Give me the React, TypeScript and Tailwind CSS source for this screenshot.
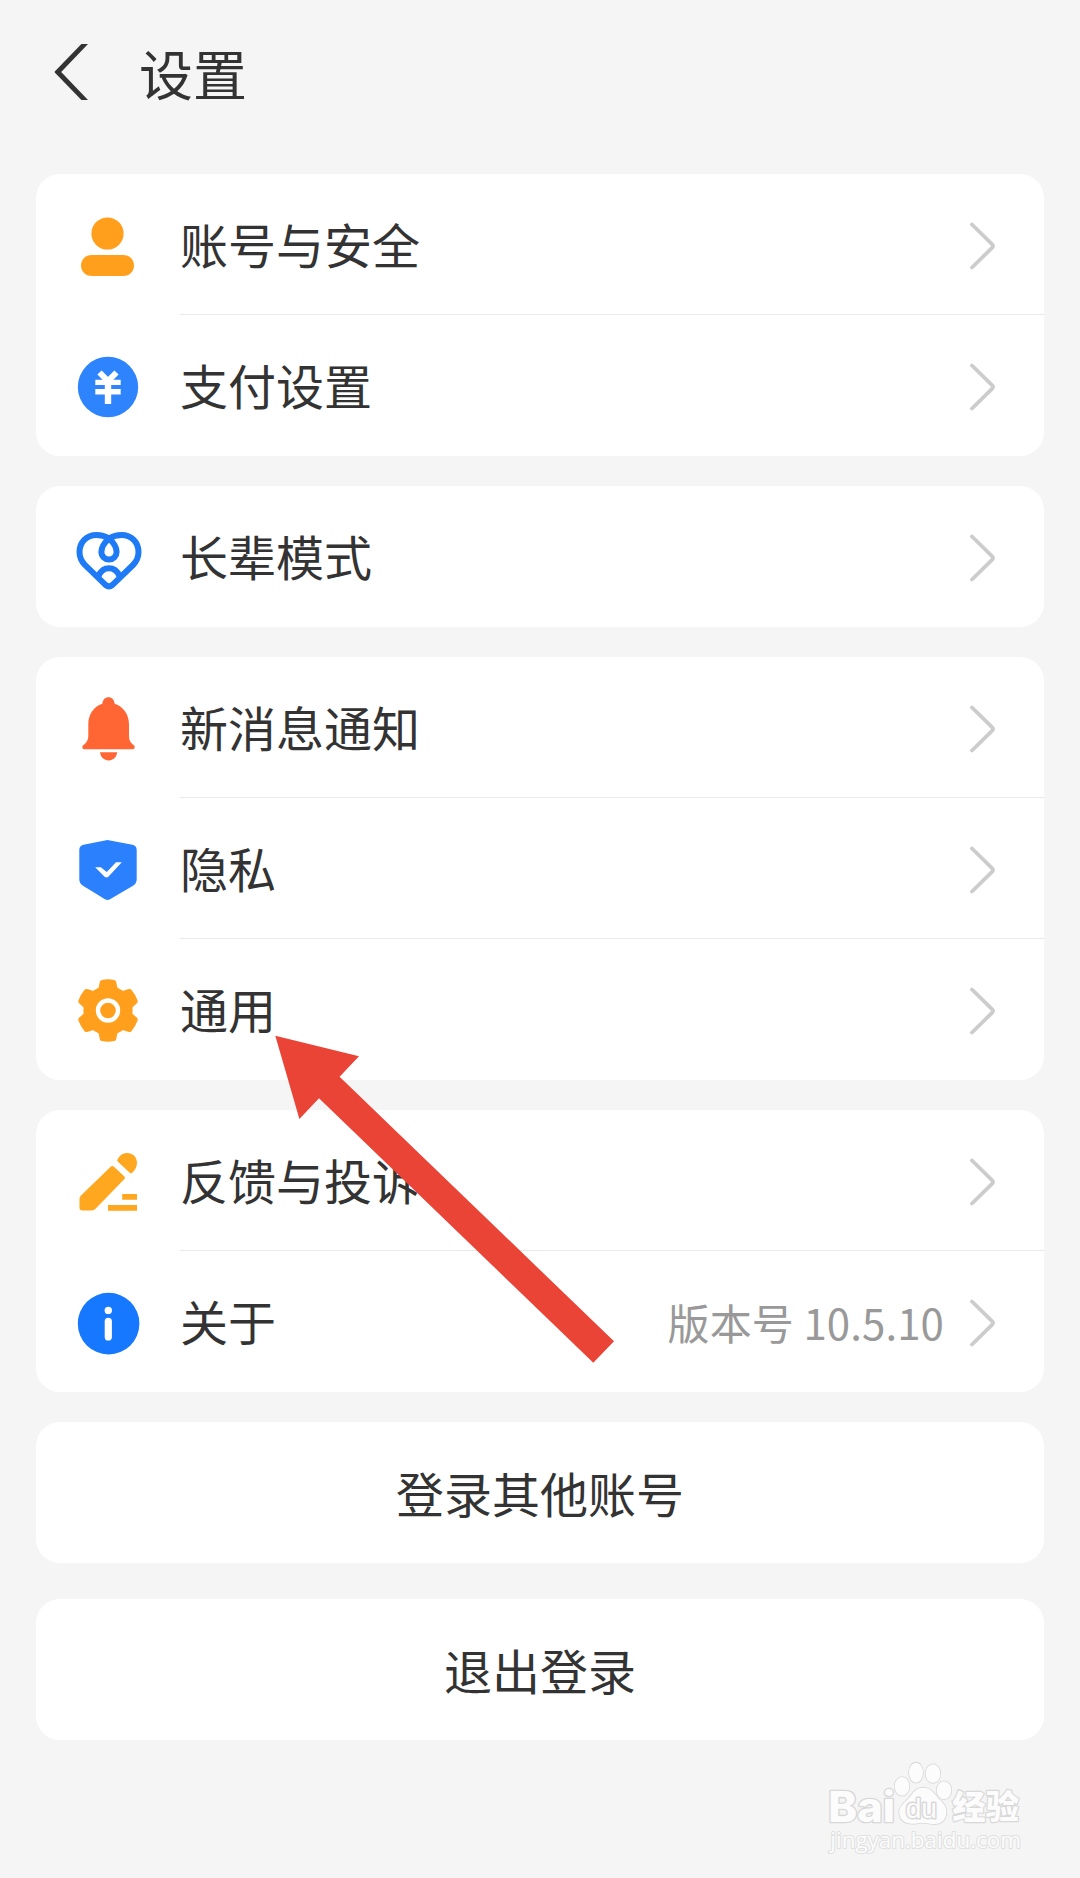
import type { ReactNode } from 'react';

interface SettingItem {
  id: string;
  label: string;
  icon: ReactNode;
  extra?: string;
}

const GEAR_TEETH = [0, 60, 120, 180, 240, 300];

function IconBox({ children }: { children: ReactNode }) {
  return (
    <svg viewBox="0 0 72 71" className="w-[72px] h-[71px] shrink-0" fill="none">
      {children}
    </svg>
  );
}

function IconAccount() {
  return (
    <IconBox>
      <circle cx="35.5" cy="24.5" r="16.1" fill="#ff9f1c" />
      <path
        d="M20 46H51C58 46 62 51 62 56.5C62 62 58 67 51 67H20C13 67 9 62 9 56.5C9 51 13 46 20 46Z"
        fill="#ff9f1c"
      />
    </IconBox>
  );
}

function IconPay() {
  return (
    <IconBox>
      <circle cx="36" cy="37" r="30.2" fill="#2e84fd" />
      <path d="M27.5 22.5L36 31L44.5 22.5" stroke="#fff" strokeWidth="6" />
      <path d="M23.3 32.4H48.7M23.3 41.8H48.7" stroke="#fff" strokeWidth="5.4" />
      <path d="M36 30V54" stroke="#fff" strokeWidth="6.4" />
    </IconBox>
  );
}

function IconElder() {
  return (
    <IconBox>
      <g stroke="#1f7af5" strokeWidth="6" strokeLinejoin="round">
        <path d="M37 17.5C33 15 28.5 14 24.5 14C14.5 14 7.5 21.5 7.5 31C7.5 36.5 9.5 40.5 13 44L33.5 63.9Q37 66.8 40.5 63.9L61 44C64.5 40.5 66.5 36.5 66.5 31C66.5 21.5 59.5 14 49.5 14C45.5 14 41 15 37 17.5Z" />
        <path d="M37 17.5C32 22 29.4 26.5 29.4 31A7.6 7.6 0 0 0 44.6 31C44.6 26.5 42 22 37 17.5Z" />
        <path d="M26.5 55Q30 47.3 37 47.3Q44 47.3 47.5 55" />
      </g>
    </IconBox>
  );
}

function IconBell() {
  return (
    <IconBox>
      <g fill="#ff6633">
        <path d="M30.3 11.8C30.7 7.8 33 5.2 36.5 5.2C40 5.2 42.3 7.8 42.7 11.8C51.5 14.8 57 22.5 57 32.5V44C57 47.5 58 50 60.5 52.3C62 53.3 62.7 54 62.7 55C62.7 56.5 61.7 57.3 60 57.3H13C11.3 57.3 10.3 56.5 10.3 55C10.3 54 11 53.3 12.5 52.3C15 50 16.3 47.5 16.3 44V32.5C16.3 22.5 21.5 14.8 30.3 11.8Z" />
        <path d="M28 60.3H45.2C44.5 65.3 41.3 68.4 36.6 68.4C31.9 68.4 28.7 65.3 28 60.3Z" />
      </g>
    </IconBox>
  );
}

function IconShield() {
  return (
    <IconBox>
      <path
        d="M33 7.5Q35.5 6.7 38 7.5L60.5 11.8Q64.7 12.8 64.7 17V46Q64.7 50.5 61 52.8L38 66.2Q35.6 67.7 33 66.2L11 52.8Q7.3 50.5 7.3 46V17Q7.3 12.8 11.5 11.8Z"
        fill="#2b80fd"
      />
      <path d="M23.2 34.3H28.8L34.8 39L44 29.3H49.8L36.3 43.7Q34.5 45.2 32.6 43.7Z" fill="#fff" />
    </IconBox>
  );
}

function IconGear() {
  return (
    <IconBox>
      <g fill="#ff9f1c">
        <circle cx="36" cy="36.5" r="24.6" />
        {GEAR_TEETH.map((angle) => (
          <path
            key={angle}
            d="M22 20Q26.3 16.5 26.9 12.5L27.8 7.8Q28.2 6.2 29.8 5.9Q36 4.8 42.2 5.9Q43.8 6.2 44.2 7.8L45.1 12.5Q45.7 16.5 50 20Z"
            transform={`rotate(${angle} 36 36.5)`}
          />
        ))}
      </g>
      <circle cx="36" cy="36.5" r="10" stroke="#fff" strokeWidth="4.4" />
    </IconBox>
  );
}

function IconFeedback() {
  return (
    <IconBox>
      <g fill="#ffa71f">
        <path d="M46.2 13.2C48.3 9.8 51.5 8 55.2 8C61 8 65 12.3 65 17.7C65 22 63 25.3 59.8 28Q58.8 28.8 57.8 27.8L45.4 16.2Q44.6 15.2 46.2 13.2Z" />
        <path d="M38.9 21.6Q40.3 20.2 41.7 21.6L52.4 31.4Q53.6 32.7 52.4 34L23.8 63.5Q22.2 65.3 19.5 65.5H10.3Q7.5 65.5 7.5 62.8V54Q7.5 51.8 9 50.5Z" />
        <path d="M50.2 49H65V54.7H50.2ZM36 60H65V65.8H36Z" />
      </g>
    </IconBox>
  );
}

function IconAbout() {
  return (
    <IconBox>
      <circle cx="36.6" cy="37.6" r="30.8" fill="#1677ff" />
      <circle cx="36.3" cy="24.4" r="3.7" fill="#fff" />
      <rect x="32.7" y="31.7" width="7.2" height="22.8" rx="3.6" fill="#fff" />
    </IconBox>
  );
}

const GROUPS: SettingItem[][] = [
  [
    { id: 'account', label: '账号与安全', icon: <IconAccount /> },
    { id: 'pay', label: '支付设置', icon: <IconPay /> },
  ],
  [{ id: 'elder', label: '长辈模式', icon: <IconElder /> }],
  [
    { id: 'notice', label: '新消息通知', icon: <IconBell /> },
    { id: 'privacy', label: '隐私', icon: <IconShield /> },
    { id: 'general', label: '通用', icon: <IconGear /> },
  ],
  [
    { id: 'feedback', label: '反馈与投诉', icon: <IconFeedback /> },
    { id: 'about', label: '关于', icon: <IconAbout />, extra: '版本号 10.5.10' },
  ],
];

function Chevron() {
  return (
    <svg viewBox="0 0 28 48" className="block mt-[3px] w-7 h-12 shrink-0" fill="none">
      <path
        d="M3 2.5L23.2 22.3Q24.8 24 23.2 25.7L3 45.5"
        stroke="#cccccc"
        strokeWidth="3.8"
        strokeLinecap="round"
      />
    </svg>
  );
}

function SettingRow({ item, divider }: { item: SettingItem; divider: boolean }) {
  return (
    <div className="flex items-center h-[141px] pl-9">
      {item.icon}
      <div
        className={`ml-9 flex-1 h-full flex items-center pr-[47px] border-b ${
          divider ? 'border-[#e9e9e9]' : 'border-transparent'
        }`}
      >
        <span className="pb-0.5 text-[48px] leading-none">{item.label}</span>
        {item.extra && (
          <span className="ml-auto mr-[25px] pt-0.5 text-[42px] leading-none tracking-[0.1px] text-[#999999]">
            {item.extra}
          </span>
        )}
        <span className={item.extra ? '' : 'ml-auto'}>
          <Chevron />
        </span>
      </div>
    </div>
  );
}

function ActionButton({ label }: { label: string }) {
  return (
    <button className="flex items-center justify-center w-full h-[141px] pb-0.5 rounded-3xl bg-white text-[48px] leading-none">
      {label}
    </button>
  );
}

function PointerArrow() {
  return (
    <svg viewBox="0 0 340 328" className="absolute left-[275px] top-[1035px] w-[340px] h-[328px]">
      <path
        d="M0.3 0.7L84 21.3L64.6 41.7L339 306.3L318.3 327.7L44 63.3L24.4 84Z"
        fill="#ea4436"
      />
    </svg>
  );
}

function Watermark() {
  return (
    <svg viewBox="80 90 600 300" className="absolute left-[827px] top-[1760px] w-[200px] h-[100px]">
      <g fill="#fcfcfc" stroke="#d8d8d8" strokeWidth="5" strokeLinejoin="round" paintOrder="stroke">
        <text
          x="84"
          y="277"
          fontSize="126"
          fontWeight="800"
          textLength="200"
          lengthAdjust="spacingAndGlyphs"
          strokeWidth="8"
          className="font-['Inter','Liberation_Sans',sans-serif]"
        >
          Bai
        </text>
        <ellipse cx="305" cy="169" rx="22" ry="28" />
        <ellipse cx="347" cy="128" rx="21" ry="30" />
        <ellipse cx="398" cy="131" rx="22" ry="28" />
        <ellipse cx="431" cy="181" rx="22" ry="27" />
        <path d="M368 173C393 173 403 193 416 207C430 220 440 231 438 250C435 275 418 284 398 282C385 281 377 278 366 278C355 278 347 282 333 281C312 280 297 269 297 247C297 229 311 219 323 207C337 192 345 173 368 173Z" />
        <text
          x="316"
          y="264"
          fontSize="84"
          textLength="94"
          lengthAdjust="spacingAndGlyphs"
          strokeWidth="9"
          className="font-['Liberation_Sans',sans-serif]"
        >
          du
        </text>
        <text
          x="456"
          y="268"
          fontSize="100"
          fontWeight="900"
          textLength="200"
          strokeWidth="7"
          className="font-['Noto_Sans_CJK_SC',sans-serif]"
        >
          经验
        </text>
        <text
          x="90"
          y="354"
          fontSize="66"
          textLength="572"
          lengthAdjust="spacingAndGlyphs"
          strokeWidth="6"
          stroke="#e0e0e0"
          className="font-['Open_Sans',sans-serif]"
        >
          jingyan.baidu.com
        </text>
      </g>
    </svg>
  );
}

export default function App() {
  return (
    <div
      lang="zh-CN"
      className="relative w-[1080px] h-[1878px] overflow-hidden bg-[#f5f5f5] text-[#333333] font-['Noto_Sans_CJK_SC',sans-serif]"
    >
      {/* Header */}
      <header className="flex items-center h-[144px] pl-[54px]">
        <svg viewBox="0 0 36 56" className="w-9 h-14" fill="#333333">
          <path d="M27.4 0H34L7.2 28L34 56H27.4L1 28.8Q0.3 28 1 27.2Z" />
        </svg>
        <h1 className="ml-[49px] pt-px text-[54px] leading-none">设置</h1>
      </header>

      {/* Settings groups */}
      <main className="px-9 pt-[30px] flex flex-col gap-[30px]">
        {GROUPS.map((group) => (
          <section key={group[0].id} className="rounded-3xl bg-white">
            {group.map((item, i) => (
              <SettingRow key={item.id} item={item} divider={i < group.length - 1} />
            ))}
          </section>
        ))}

        {/* Actions */}
        <div className="flex flex-col gap-9">
          <ActionButton label="登录其他账号" />
          <ActionButton label="退出登录" />
        </div>
      </main>

      <PointerArrow />
      <Watermark />
    </div>
  );
}
